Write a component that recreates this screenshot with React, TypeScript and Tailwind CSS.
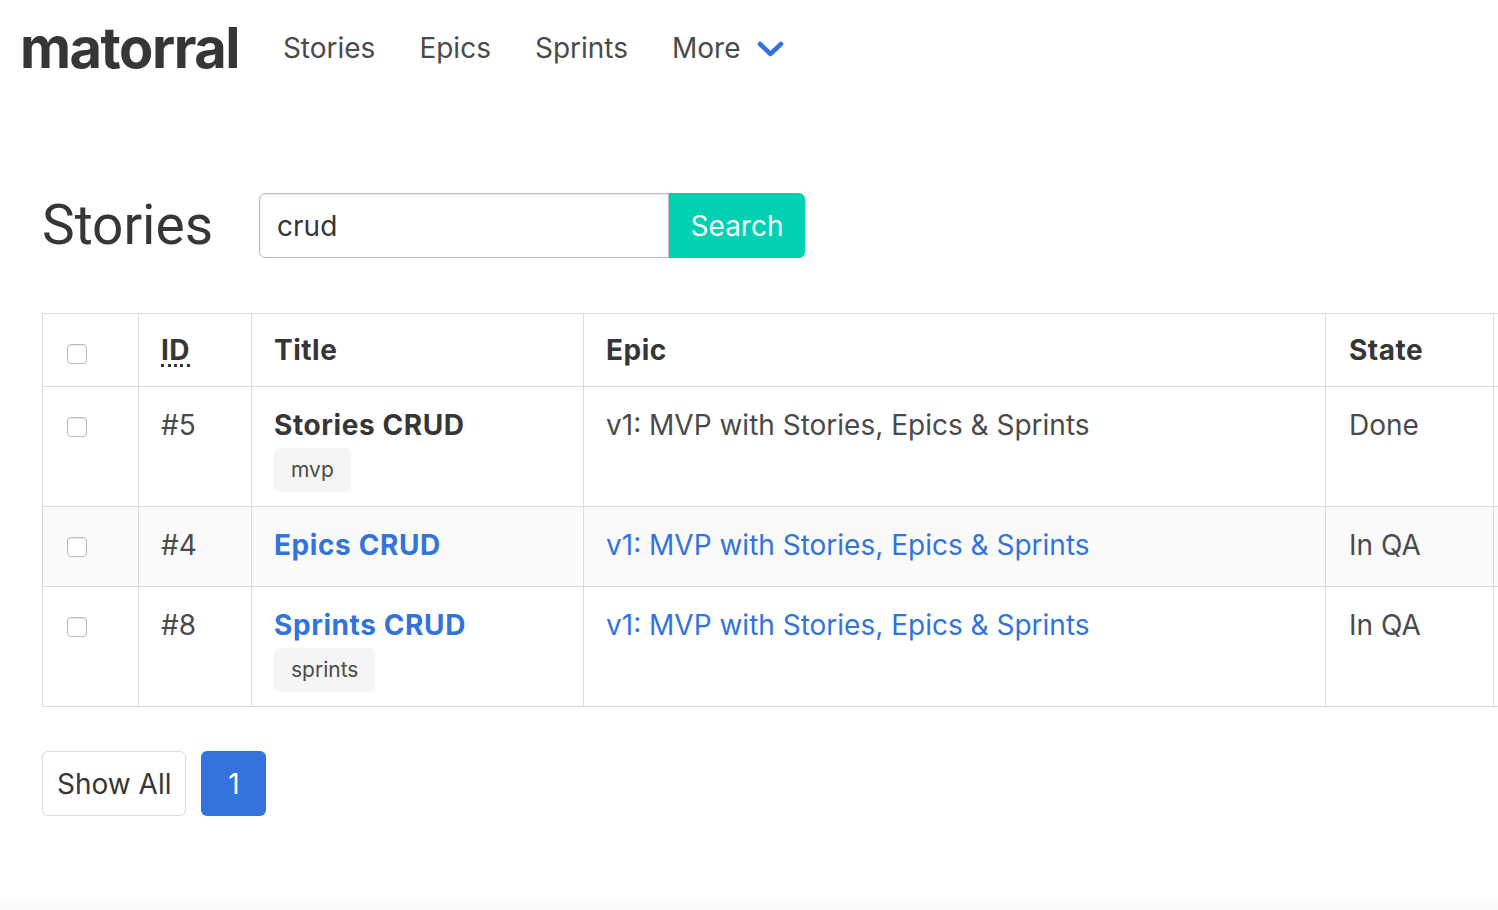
type Story = {
  id: number;
  title: string;
  epic: string;
  state: string;
  tag?: string;
  link: boolean;
};

const stories: Story[] = [
  { id: 5, title: "Stories CRUD", epic: "v1: MVP with Stories, Epics & Sprints", state: "Done", tag: "mvp", link: false },
  { id: 4, title: "Epics CRUD", epic: "v1: MVP with Stories, Epics & Sprints", state: "In QA", link: true },
  { id: 8, title: "Sprints CRUD", epic: "v1: MVP with Stories, Epics & Sprints", state: "In QA", tag: "sprints", link: true },
];

const Checkbox = () => (
  <span className="block h-[20px] w-[20px] rounded-[4px] border border-[#b9b9b9] bg-white shadow-[inset_0_1px_1px_rgba(0,0,0,0.08)]" />
);

const App = () => {
  return (
    <div className="min-h-[910px] w-full overflow-hidden bg-white text-[#4a4a4a] font-['Inter',sans-serif] flex flex-col">
      {/* navbar */}
      <nav className="flex items-center h-[96px] pl-[20px]">
        <a className="text-[56px] font-bold text-[#363636] tracking-[-1.5px] leading-none mr-[44px] -mt-[1px]">matorral</a>
        <div className="flex items-center gap-[44px] text-[28px]">
          <a>Stories</a>
          <a>Epics</a>
          <a>Sprints</a>
          <a className="flex items-center gap-[17px]">
            More
            <svg width="27" height="18" viewBox="0 0 27 18" fill="none" className="mt-[2px]">
              <path d="M3 4 L13.5 14 L24 4" stroke="#3273dc" strokeWidth="4.5" strokeLinecap="round" strokeLinejoin="round" />
            </svg>
          </a>
        </div>
      </nav>

      {/* content */}
      <section className="pl-[42px] pt-[97px] flex-1">
        <div className="flex items-center h-[65px]">
          <h1 className="text-[55px] text-[#363636] font-['Roboto',sans-serif] leading-none mr-[46px]">Stories</h1>
          <div className="flex">
            <input
              defaultValue="crud"
              className="w-[410px] h-[65px] border border-[#bdbdbd] rounded-l-[6px] px-[17px] text-[28px] text-[#363636] outline-none shadow-[inset_0_1px_2px_rgba(10,10,10,0.1)]"
            />
            <button className="h-[65px] w-[136px] bg-[#00d1b2] text-white text-[28px] rounded-r-[6px]">Search</button>
          </div>
        </div>

        <table className="mt-[55px] table-fixed border-collapse w-[1620px] text-[28px]">
          <colgroup>
            <col className="w-[96px]" />
            <col className="w-[113px]" />
            <col className="w-[332px]" />
            <col className="w-[742px]" />
            <col className="w-[168px]" />
            <col />
          </colgroup>
          <thead>
            <tr className="text-left text-[#363636] tracking-[0.5px]">
              <th className="border border-[#dbdbdb] px-[24px] pt-[18px] pb-[10px] leading-[44px] align-top">
                <div className="h-[44px] pt-[12px]">
                  <Checkbox />
                </div>
              </th>
              <th className="border border-[#dbdbdb] px-[22px] py-[14px] leading-[44px] font-bold">
                <abbr className="no-underline border-b-[3px] border-dotted border-[#363636] leading-[28px] inline-block">ID</abbr>
              </th>
              <th className="border border-[#dbdbdb] px-[22px] py-[14px] leading-[44px] font-bold">Title</th>
              <th className="border border-[#dbdbdb] px-[22px] py-[14px] leading-[44px] font-bold">Epic</th>
              <th className="border border-[#dbdbdb] px-[23px] py-[14px] leading-[44px] font-bold">State</th>
              <th className="border border-[#dbdbdb] border-r-0"></th>
            </tr>
          </thead>
          <tbody>
            {stories.map((s, i) => (
              <tr key={s.id} className={i === 1 ? "bg-[#fafafa]" : ""}>
                <td className="border border-[#dbdbdb] px-[24px] pt-[30px] pb-[19px] align-top">
                  <Checkbox />
                </td>
                <td className="border border-[#dbdbdb] px-[22px] pt-[16px] pb-[19px] leading-[44px] align-top">#{s.id}</td>
                <td className="border border-[#dbdbdb] px-[22px] pt-[16px] pb-[19px] leading-[44px] align-top">
                  <div className={s.link ? "font-bold tracking-[0.6px] text-[#3273dc]" : "font-bold tracking-[0.6px] text-[#363636]"}>{s.title}</div>
                  {s.tag && (
                    <span className="mt-[1px] -mb-[5px] flex w-fit items-center h-[44px] px-[17px] rounded-[6px] bg-[#f5f5f5] text-[21px] text-[#4a4a4a]">
                      {s.tag}
                    </span>
                  )}
                </td>
                <td className={`border border-[#dbdbdb] px-[22px] pt-[16px] pb-[19px] leading-[44px] align-top ${s.link ? "text-[#3273dc]" : ""}`}>
                  {s.epic}
                </td>
                <td className="border border-[#dbdbdb] px-[23px] pt-[16px] pb-[19px] leading-[44px] align-top">{s.state}</td>
                <td className="border border-[#dbdbdb] border-r-0"></td>
              </tr>
            ))}
          </tbody>
        </table>

        <div className="flex gap-[15px] mt-[44px]">
          <button className="h-[65px] px-[14px] border border-[#dbdbdb] rounded-[6px] text-[28px] text-[#363636] bg-white">Show All</button>
          <button className="h-[65px] w-[65px] rounded-[6px] bg-[#3273dc] text-white text-[28px]">1</button>
        </div>
      </section>

      <footer className="h-[7px] bg-[#fafafa]" />
    </div>
  );
};

export default App;
